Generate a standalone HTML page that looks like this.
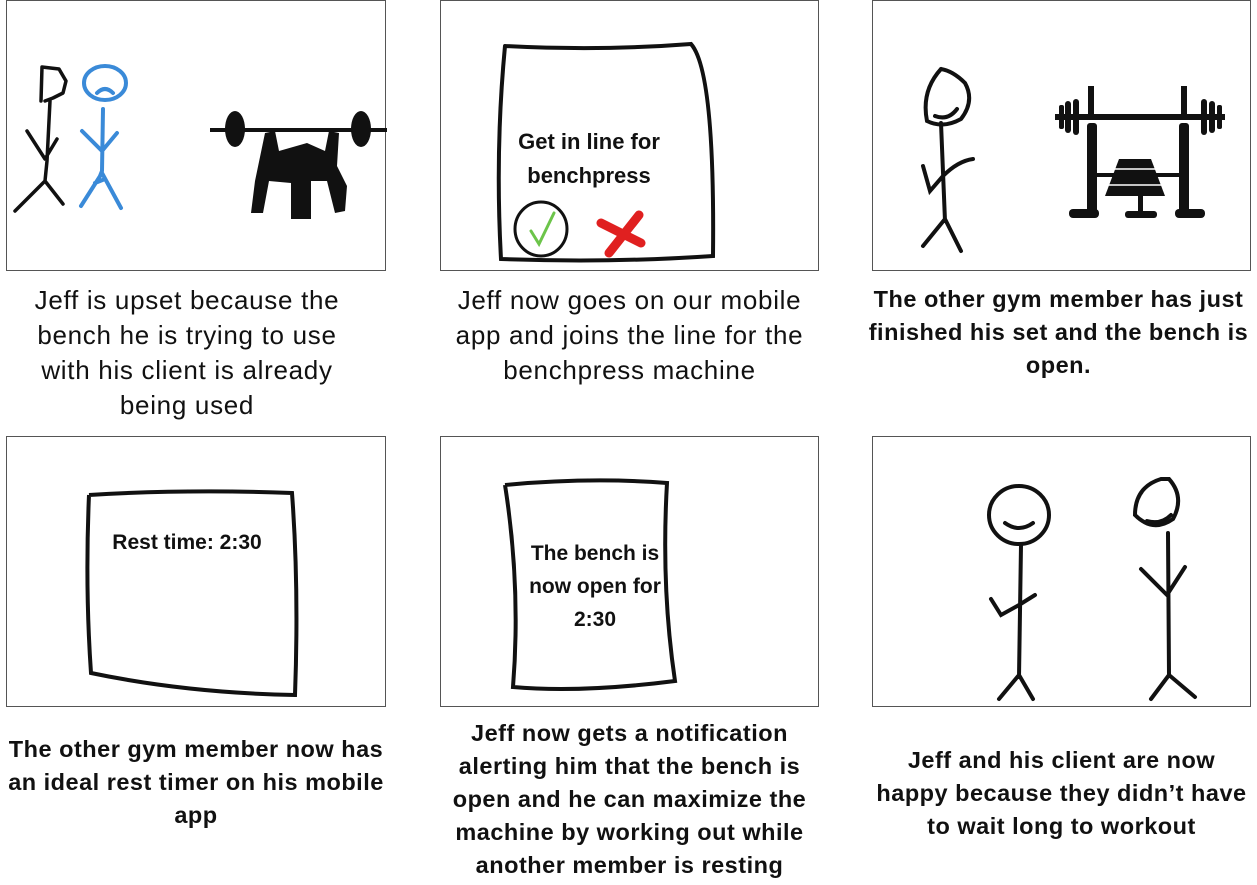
<!DOCTYPE html>
<html><head><meta charset="utf-8"><style>
body{margin:0;width:1257px;height:885px;background:#fff;position:relative;overflow:hidden;font-family:"Liberation Sans",sans-serif;color:#111}
.p{position:absolute;border:1px solid #555;box-sizing:border-box;background:#fff}
.c{position:absolute;text-align:center;font-size:26px;line-height:35px;white-space:nowrap;letter-spacing:0.7px}
.b{font-weight:bold;font-size:23.5px;line-height:33px;letter-spacing:0.5px}
svg{position:absolute;left:0;top:0}
</style></head><body>
<div class="p" style="left:6px;top:0;width:380px;height:271px">
<svg width="380" height="271" fill="none" stroke-linecap="round" stroke-linejoin="round">
<g stroke="#111" stroke-width="3.5"><path d="M34 100 L35 66 L52 68 L59 80 L56 92 L46 97 L38 100"/><path d="M43 100 L40 160 L38 180 M20 130 L38 158 L50 138 M38 180 L8 210 M38 180 L56 203"/></g>
<g stroke="#3a8ad8" stroke-width="4"><ellipse cx="98" cy="82" rx="21" ry="17"/><path d="M90 92 Q98 84 106 92 M96 108 L95 170 L93 175 M75 130 L95 150 L110 132 M95 172 L74 205 M95 172 L114 207 M88 182 L98 178"/></g>
<g fill="#111"><rect x="203" y="127" width="178" height="4"/><ellipse cx="228" cy="128" rx="10" ry="18"/><ellipse cx="354" cy="128" rx="10" ry="18"/><path d="M258 132 L268 130 L272 150 L300 142 L318 150 L322 130 L332 132 L330 165 L340 185 L338 210 L328 212 L320 180 L304 180 L304 218 L284 218 L284 182 L262 180 L256 212 L244 212 L248 180 Z"/></g>
</svg></div>
<div class="p" style="left:440px;top:0;width:379px;height:271px">
<svg width="379" height="271" fill="none" stroke="#111" stroke-width="4" stroke-linecap="round">
<path d="M64 45 Q160 50 250 43 Q274 70 272 255 Q170 262 60 258 Q54 150 64 45"/>
<ellipse cx="100" cy="228" rx="26" ry="27" stroke-width="3"/>
<path d="M90 230 L98 243 L113 212" stroke="#6cc44a" stroke-width="3"/>
<path d="M160 222 L200 242 M198 214 L168 252" stroke="#e02020" stroke-width="9"/>
<text x="148" y="148" text-anchor="middle" font-size="22" font-weight="bold" fill="#111" stroke="none" font-family="Liberation Sans">Get in line for</text>
<text x="148" y="182" text-anchor="middle" font-size="22" font-weight="bold" fill="#111" stroke="none" font-family="Liberation Sans">benchpress</text>
</svg></div>
<div class="p" style="left:872px;top:0;width:379px;height:271px">
<svg width="379" height="271" fill="none" stroke-linecap="round">
<g stroke="#111" stroke-width="4"><path d="M68 68 Q48 90 54 120 Q70 128 88 118 Q102 100 92 82 Q80 70 68 68"/><path d="M62 115 Q75 120 84 108"/><path d="M68 122 L72 220 M50 165 L57 190 L70 175 Q85 160 100 158 M72 218 L50 245 M72 218 L88 250"/></g>
<g fill="#111"><rect x="182" y="113" width="170" height="6"/><rect x="215" y="85" width="6" height="30"/><rect x="308" y="85" width="6" height="30"/><rect x="214" y="122" width="10" height="90" rx="3"/><rect x="306" y="122" width="10" height="90" rx="3"/><rect x="192" y="100" width="6" height="32" rx="3"/><rect x="200" y="98" width="6" height="36" rx="3"/><rect x="186" y="104" width="5" height="24" rx="2"/><rect x="328" y="98" width="6" height="36" rx="3"/><rect x="336" y="100" width="6" height="32" rx="3"/><rect x="344" y="104" width="5" height="24" rx="2"/><rect x="224" y="172" width="84" height="4"/><path d="M246 158 L278 158 L292 195 L232 195 Z"/><rect x="265" y="195" width="5" height="16"/><rect x="196" y="208" width="30" height="9" rx="4"/><rect x="252" y="210" width="32" height="7" rx="3"/><rect x="302" y="208" width="30" height="9" rx="4"/></g>
<g stroke="#fff" stroke-width="1.5"><path d="M240 168 L284 168 M236 184 L288 184"/></g>
</svg></div>
<div class="c" style="left:6px;top:283px;width:362px">Jeff is upset because the<br>bench he is trying to use<br>with his client is already<br>being used</div>
<div class="c" style="left:440px;top:283px;width:379px">Jeff now goes on our mobile<br>app and joins the line for the<br>benchpress machine</div>
<div class="c b" style="left:866px;top:283px;width:385px">The other gym member has just<br>finished his set and the bench is<br>open.</div>

<div class="p" style="left:6px;top:436px;width:380px;height:271px">
<svg width="380" height="271" fill="none" stroke="#111" stroke-width="4"><path d="M82 58 Q180 52 285 56 Q292 150 288 258 Q180 256 84 236 Q78 150 82 58"/>
<text x="180" y="112" text-anchor="middle" font-size="21" font-weight="bold" fill="#111" stroke="none" font-family="Liberation Sans">Rest time: 2:30</text></svg></div>
<div class="p" style="left:440px;top:436px;width:379px;height:271px">
<svg width="379" height="271" fill="none" stroke="#111" stroke-width="4"><path d="M64 48 Q150 40 226 46 Q220 150 234 244 Q140 256 72 250 Q80 150 64 48"/>
<text x="154" y="123" text-anchor="middle" font-size="21" font-weight="bold" fill="#111" stroke="none" font-family="Liberation Sans">The bench is</text>
<text x="154" y="156" text-anchor="middle" font-size="21" font-weight="bold" fill="#111" stroke="none" font-family="Liberation Sans">now open for</text>
<text x="154" y="189" text-anchor="middle" font-size="21" font-weight="bold" fill="#111" stroke="none" font-family="Liberation Sans">2:30</text></svg></div>
<div class="p" style="left:872px;top:436px;width:379px;height:271px">
<svg width="379" height="271" fill="none" stroke="#111" stroke-width="4" stroke-linecap="round"><ellipse cx="146" cy="78" rx="30" ry="29"/><path d="M132 86 Q146 96 160 86"/><path d="M148 108 L146 240 M118 162 L128 178 L146 168 L162 158 M146 238 L126 262 M146 238 L160 262"/>
<path d="M288 42 Q262 50 262 78 Q280 96 300 82 Q312 60 296 42 Z"/><path d="M274 84 Q288 88 298 78"/><path d="M295 96 L296 238 M268 132 L294 158 L312 130 M296 238 L278 262 M296 238 L322 260"/></svg></div>
<div class="c b" style="left:0;top:733px;width:392px">The other gym member now has<br>an ideal rest timer on his mobile<br>app</div>
<div class="c b" style="left:440px;top:717px;width:379px">Jeff now gets a notification<br>alerting him that the bench is<br>open and he can maximize the<br>machine by working out while<br>another member is resting</div>
<div class="c b" style="left:866px;top:744px;width:391px">Jeff and his client are now<br>happy because they didn’t have<br>to wait long to workout</div>
</body></html>
